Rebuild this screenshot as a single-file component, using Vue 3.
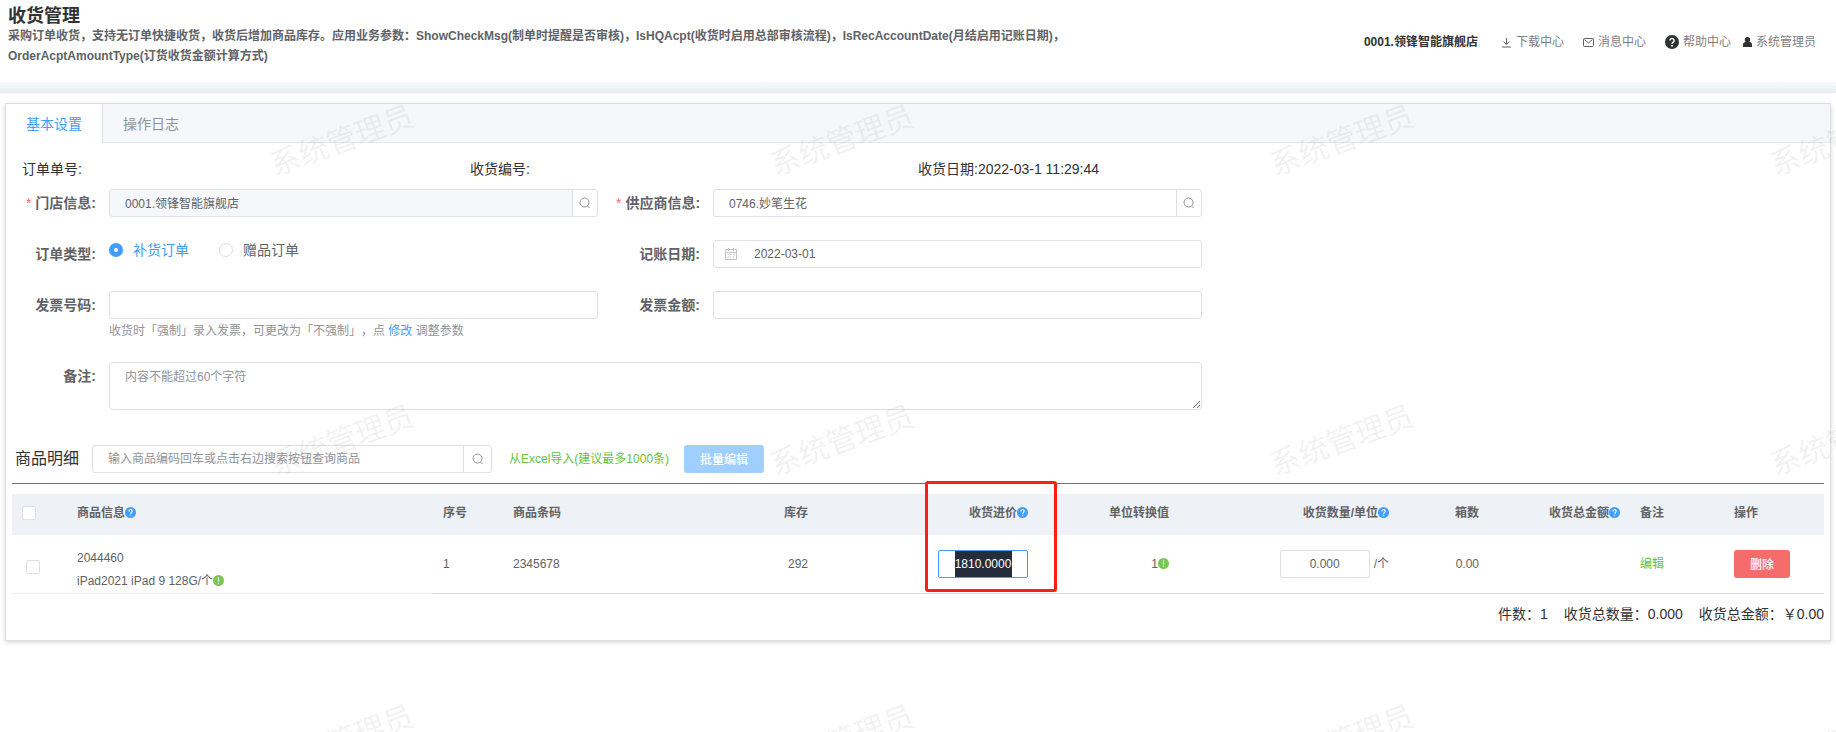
<script setup>
import { ref } from "vue"

const activeTab = ref("base")
const orderType = ref("补货订单")
const store = ref("0001.领锋智能旗舰店")
const supplier = ref("0746.妙笔生花")
const accountDate = ref("2022-03-01")
const invoiceNo = ref("")
const invoiceAmount = ref("")
const remark = ref("")
const keyword = ref("")

const tabs = [
  { key: "base", label: "基本设置" },
  { key: "log", label: "操作日志" }
]

const rows = ref([
  {
    id: 1,
    code: "2044460",
    name: "iPad2021 iPad 9 128G/个",
    barcode: "2345678",
    stock: "292",
    price: "1810.0000",
    ratio: "1",
    qty: "0.000",
    unit: "个",
    boxes: "0.00"
  }
])

// 删除
const remove = (id) => {
  rows.value = rows.value.filter(r => r.id !== id)
}
</script>

<template>
  <div class="page">
    <!-- 图标 -->
    <svg class="defs" aria-hidden="true">
      <symbol id="i-search" viewBox="0 0 12 12">
        <circle cx="5.5" cy="5.5" r="4.5" fill="none" stroke="currentColor" />
        <path d="M8.5 9l2 2" fill="none" stroke="currentColor" />
      </symbol>
      <symbol id="i-question" viewBox="0 0 16 16">
        <circle cx="8" cy="8" r="8" fill="currentColor" />
        <path d="M5.6 6.4a2.4 2.4 0 1 1 3.6 2C8.4 8.9 8 9.2 8 10.1" fill="none" stroke="#fff" stroke-width="1.7" />
        <circle cx="8" cy="12.2" r="1.1" fill="#fff" />
      </symbol>
      <symbol id="i-warn" viewBox="0 0 16 16">
        <circle cx="8" cy="8" r="8" fill="currentColor" />
        <path d="M8 3.5v5.800" stroke="#fff" stroke-width="1.6" />
        <circle cx="8" cy="11.8" r="1" fill="#fff" />
      </symbol>
    </svg>

    <header class="header">
      <div class="intro">
        <h1>收货管理</h1>
        <p>采购订单收货，支持无订单快捷收货，收货后增加商品库存。应用业务参数：ShowCheckMsg(制单时提醒是否审核)，IsHQAcpt(收货时启用总部审核流程)，IsRecAccountDate(月结启用记账日期)，OrderAcptAmountType(订货收货金额计算方式)</p>
      </div>
      <nav class="links">
        <strong>0001.领锋智能旗舰店</strong>
        <a href="#">
          <svg width="11" height="11" viewBox="0 0 11 11" fill="none" stroke="#606266"><path d="M5.5 1v6M2.5 4.5l3 3 3-3M1 10h9" /></svg>
          下载中心
        </a>
        <a href="#">
          <svg width="11" height="11" viewBox="0 0 11 11" fill="none" stroke="#606266"><rect x=".5" y="1.5" width="10" height="8" rx="1" /><path d="M1.5 2.5l4 3.5 4-3.5" /></svg>
          消息中心
        </a>
        <a href="#" class="help">
          <svg class="dark" width="14" height="14"><use href="#i-question" /></svg>
          帮助中心
        </a>
        <a href="#" class="user">
          <svg width="9" height="10" viewBox="0 0 10 11" fill="#303133"><circle cx="5" cy="3" r="3" /><path d="M0 11V8.5C0 6.5 1.5 5.5 2.5 5.5h5c1 0 2.5 1 2.5 3V11z" /></svg>
          系统管理员
        </a>
      </nav>
    </header>
    <div class="band"></div>

    <main class="card">
      <div class="tabs">
        <button
          v-for="t in tabs"
          :key="t.key"
          :class="['tab', activeTab === t.key ? 'active' : '']"
          @click="activeTab = t.key"
        >
          {{ t.label }}
        </button>
      </div>

      <div class="content">
        <div class="info">
          <span>订单单号:</span>
          <span>收货编号:</span>
          <span>收货日期:2022-03-1 11:29:44</span>
        </div>

        <!-- 表单 -->
        <form class="form" @submit.prevent>
          <div class="item">
            <label class="required" for="store">门店信息:</label>
            <div class="group disabled">
              <input id="store" v-model="store" type="text" disabled />
              <button type="button" aria-label="选择门店"><svg width="12" height="12"><use href="#i-search" /></svg></button>
            </div>
          </div>
          <div class="item">
            <label class="required" for="supplier">供应商信息:</label>
            <div class="group">
              <input id="supplier" v-model="supplier" type="text" />
              <button type="button" aria-label="选择供应商"><svg width="12" height="12"><use href="#i-search" /></svg></button>
            </div>
          </div>

          <div class="item first">
            <span class="label">订单类型:</span>
            <div class="radios">
              <label v-for="t in ['补货订单', '赠品订单']" :key="t" :class="{ checked: orderType === t }">
                <input v-model="orderType" type="radio" name="orderType" :value="t" />{{ t }}
              </label>
            </div>
          </div>
          <div class="item">
            <label for="accountDate">记账日期:</label>
            <div class="group date">
              <svg width="12" height="12" viewBox="0 0 12 12" fill="none" stroke="#c0c4cc">
                <path d="M.5 1.5h11v10H.5zM.5 4.5h11M3.5 0v3M8.5 0v3M2.5 6.5h1.5M5.2 6.5h1.5M8 6.5h1.5M2.5 9h1.5M5.2 9h1.5M8 9h1.5" />
              </svg>
              <input id="accountDate" v-model="accountDate" type="text" />
            </div>
          </div>

          <div class="item first">
            <label for="invoiceNo">发票号码:</label>
            <div class="field">
              <div class="group"><input id="invoiceNo" v-model="invoiceNo" type="text" /></div>
              <p class="tip">收货时「强制」录入发票，可更改为「不强制」，点 <a href="#">修改</a> 调整参数</p>
            </div>
          </div>
          <div class="item">
            <label for="invoiceAmount">发票金额:</label>
            <div class="group"><input id="invoiceAmount" v-model="invoiceAmount" type="text" /></div>
          </div>

          <div class="item first wide">
            <label for="remark">备注:</label>
            <textarea id="remark" v-model="remark" placeholder="内容不能超过60个字符"></textarea>
          </div>
        </form>

        <!-- 商品明细 -->
        <div class="toolbar">
          <label for="keyword">商品明细</label>
          <div class="group search">
            <input id="keyword" v-model="keyword" type="text" placeholder="输入商品编码回车或点击右边搜索按钮查询商品" />
            <button type="button" aria-label="搜索"><svg width="12" height="12"><use href="#i-search" /></svg></button>
          </div>
          <a href="#" class="green">从Excel导入(建议最多1000条)</a>
          <button class="batch" type="button">批量编辑</button>
        </div>

        <table class="table">
          <colgroup>
            <col class="w-check"><col class="w-info"><col class="w-no"><col class="w-barcode">
            <col class="w-ratio"><col class="w-input"><col class="w-ratio"><col class="w-input">
            <col class="w-box"><col class="w-ratio"><col class="w-remark"><col class="w-action">
          </colgroup>
          <thead>
            <tr>
              <th><input type="checkbox" aria-label="全选" /></th>
              <th>商品信息<svg class="blue"><use href="#i-question" /></svg></th>
              <th>序号</th>
              <th>商品条码</th>
              <th class="right">库存</th>
              <th class="right price">收货进价<svg class="blue"><use href="#i-question" /></svg><i class="mark"></i></th>
              <th class="right">单位转换值</th>
              <th class="right">收货数量/单位<svg class="blue"><use href="#i-question" /></svg></th>
              <th class="right">箱数</th>
              <th class="right">收货总金额<svg class="blue"><use href="#i-question" /></svg></th>
              <th>备注</th>
              <th>操作</th>
            </tr>
          </thead>
          <tbody>
            <tr v-for="(row, i) in rows" :key="row.id">
              <td class="check"><input type="checkbox" :aria-label="row.name" /></td>
              <td class="goods">{{ row.code }}<br>{{ row.name }}<svg class="warn"><use href="#i-warn" /></svg></td>
              <td>{{ i + 1 }}</td>
              <td>{{ row.barcode }}</td>
              <td class="right">{{ row.stock }}</td>
              <td class="right">
                <div class="num editing"><span class="selected"><input v-model="row.price" type="text" aria-label="收货进价" /></span></div>
              </td>
              <td class="right">{{ row.ratio }}<svg class="warn"><use href="#i-warn" /></svg></td>
              <td class="right">
                <div class="qty">
                  <div class="num"><input v-model="row.qty" type="text" aria-label="收货数量" /></div>
                  <span>/{{ row.unit }}</span>
                </div>
              </td>
              <td class="right">{{ row.boxes }}</td>
              <td></td>
              <td><a href="#" class="green">编辑</a></td>
              <td><button class="delete" type="button" @click="remove(row.id)">删除</button></td>
            </tr>
          </tbody>
        </table>

        <div class="total">
          <span>件数：{{ rows.length }}</span>
          <span>收货总数量：0.000</span>
          <span>收货总金额：￥0.00</span>
        </div>
      </div>
    </main>

    <!-- 水印 -->
    <div class="watermark" aria-hidden="true">
      <span v-for="n in 12" :key="n">系统管理员</span>
    </div>
  </div>
</template>

<style>
body {
  margin: 0;
  background: #fff;
}
</style>

<style scoped>
.page {
  position: relative;
  min-height: 100vh;
  overflow: hidden;
  font-family: "Liberation Sans", "Noto Sans CJK SC", sans-serif;
  font-size: 12px;
  line-height: 20px;
  color: #606266;
}

.page * {
  box-sizing: border-box;
}

.defs {
  position: absolute;
  width: 0;
  height: 0;
}

input,
button,
textarea {
  font-family: inherit;
  font-size: 12px;
  color: #606266;
}

a {
  text-decoration: none;
}

svg {
  flex: none;
}

/* 页头 */
.header {
  display: flex;
  justify-content: space-between;
  height: 82px;
  padding: 6px 20px 0 8px;
}

.intro {
  flex: 0 1 60%;
}

h1 {
  margin: 0;
  font-size: 18px;
  line-height: 20px;
  color: #303133;
}

.intro p {
  margin: 0;
  font-weight: bold;
}

.links {
  display: flex;
  align-items: center;
  height: 20px;
  margin-top: 26px;
}

.links strong {
  margin-right: 23px;
  color: #303133;
}

.links a {
  display: flex;
  align-items: center;
  gap: 4px;
  margin-right: 19px;
  color: #808080;
}

.links .help {
  margin-right: 12px;
}

.links .user {
  margin-right: 0;
}

.dark {
  color: #303133;
}

.band {
  height: 11px;
  background: linear-gradient(#f8f9fb, #e9edf1);
}

/* 标签页 */
.card {
  margin: 10px 5px 0;
  border: 1px solid #dcdfe6;
  box-shadow: 0 2px 4px rgba(0, 0, 0, 0.12), 0 0 6px rgba(0, 0, 0, 0.04);
}

.tabs {
  display: flex;
  height: 39px;
  background: #f5f7fa;
  border-bottom: 1px solid #e4e7ed;
}

.tab {
  height: 39px;
  padding: 0 20px 2px;
  border: none;
  background: none;
  font-size: 14px;
  color: #909399;
}

.tab.active {
  background: #fff;
  border-right: 1px solid #dcdfe6;
  color: #409eff;
}

.content {
  padding: 16px 6px;
}

.info {
  display: grid;
  grid-template-columns: repeat(4, 1fr);
  padding: 0 10px;
  font-size: 14px;
  color: #303133;
}

/* 表单 */
.form {
  display: grid;
  grid-template-columns: repeat(3, 1fr);
  row-gap: 23px;
  margin-top: 10px;
}

.item {
  display: flex;
  align-items: flex-start;
  padding-right: 18px;
}

.first {
  grid-column: 1;
}

.wide {
  grid-column: 1 / span 2;
}

.item > label,
.label {
  flex: none;
  width: 97px;
  padding-right: 13px;
  font-size: 14px;
  font-weight: bold;
  line-height: 28px;
  text-align: right;
  white-space: nowrap;
}

.required::before {
  content: "*";
  margin-right: 4px;
  font-weight: normal;
  color: #f56c6c;
}

.field {
  flex: 1;
}

.group {
  display: flex;
  flex: 1;
  align-items: center;
  height: 28px;
  border: 1px solid #dcdfe6;
  border-radius: 3px;
  background: #fff;
}

.group input {
  flex: 1;
  min-width: 0;
  height: 26px;
  padding: 0 15px 2px;
  border: none;
  background: none;
  outline: none;
}

.group button {
  display: flex;
  align-items: center;
  justify-content: center;
  width: 25px;
  height: 26px;
  padding: 0;
  border: none;
  border-left: 1px solid #dcdfe6;
  border-radius: 0 3px 3px 0;
  background: #fff;
  color: #909399;
}

.disabled {
  background: #f5f7fa;
}

.date {
  padding-left: 11px;
}

.date input {
  padding: 0 15px 0 17px;
}

.radios {
  display: flex;
  gap: 30px;
  font-size: 14px;
}

.radios label {
  display: flex;
  align-items: center;
  gap: 10px;
}

.radios input {
  appearance: none;
  width: 14px;
  height: 14px;
  margin: 0;
  border: 1px solid #dcdfe6;
  border-radius: 50%;
}

.radios input:checked {
  border: 5px solid #409eff;
}

.checked {
  color: #409eff;
}

.tip {
  margin: 2px 0 -2px;
  color: #909399;
  text-spacing-trim: space-all;
}

.tip a {
  color: #409eff;
}

textarea {
  flex: 1;
  height: 48px;
  padding: 5px 15px;
  border: 1px solid #dcdfe6;
  border-radius: 4px;
  line-height: 18px;
  outline: none;
}

::placeholder {
  color: #909399;
}

/* 商品明细 */
.toolbar {
  display: flex;
  align-items: center;
  margin-top: 35px;
  padding: 0 3px 10px;
  border-bottom: 1px solid #737373;
}

.toolbar label {
  margin-right: 13px;
  font-size: 16px;
  color: #303133;
}

.search {
  flex: 0 1 400px;
  margin-right: 17px;
}

.toolbar .search input {
  padding: 0 15px;
}

.search button {
  width: 28px;
}

.green {
  color: #67c23a;
}

.batch,
.delete {
  height: 28px;
  padding: 0 16px 2px;
  border: none;
  border-radius: 3px;
  font-weight: 500;
  color: #fff;
}

.batch {
  margin-left: 15px;
  background: #a0cfff;
}

.delete {
  background: #f56c6c;
}

.table {
  width: 100%;
  margin-top: 10px;
  border-collapse: separate;
  border-spacing: 0;
  table-layout: fixed;
}

.w-check { width: 55px; }
.w-info { width: 366px; }
.w-no { width: 70px; }
.w-barcode { width: 174px; }
.w-ratio { width: 141px; }
.w-input { width: 220px; }
.w-box { width: 90px; }
.w-remark { width: 94px; }
.w-action { width: 100px; }

th,
td {
  padding: 0 10px;
  text-align: left;
}

th {
  height: 41px;
  padding-bottom: 4px;
  background: #eef1f6;
}

td {
  height: 59px;
  border-bottom: 1px solid #d8dadd;
}

.right {
  text-align: right;
}

td:nth-child(-n + 2) {
  border-color: #ebeef5;
}

.check {
  padding: 5px 10px 0 14px;
}

.goods {
  padding-top: 12px;
  line-height: 23px;
}

th svg,
td svg {
  width: 11px;
  height: 11px;
  vertical-align: -1px;
}

.blue {
  color: #409eff;
}

.warn {
  color: #7ac756;
}

th input,
.check input {
  appearance: none;
  display: block;
  width: 14px;
  height: 14px;
  margin: 0;
  border: 1px solid #dcdfe6;
  border-radius: 2px;
  background: #fff;
}

/* 进价列标注框 */
.price {
  position: relative;
}

.mark {
  position: absolute;
  top: -13px;
  right: -19px;
  width: 132px;
  height: 111px;
  border: 3px solid #ff1e10;
  border-radius: 3px;
  pointer-events: none;
}

.num {
  display: flex;
  justify-content: center;
  width: 90px;
  height: 28px;
  margin-left: auto;
  border: 1px solid #dcdfe6;
  border-radius: 2px;
}

.num input {
  width: 57px;
  height: 26px;
  padding: 0;
  border: none;
  background: none;
  text-align: center;
  outline: none;
}

.editing {
  border-color: #409eff;
}

.selected {
  background: #252d3d;
}

.selected input {
  color: #fff;
}

.qty {
  display: flex;
  align-items: center;
  justify-content: flex-end;
  gap: 4px;
}

.qty .num {
  margin: 0;
}

.total {
  display: flex;
  justify-content: flex-end;
  gap: 16px;
  margin-top: 10px;
  font-size: 14px;
  color: #303133;
}

/* 水印 */
.watermark {
  position: absolute;
  inset: 0;
  display: grid;
  grid-template-columns: repeat(4, 500px);
  grid-auto-rows: 300px;
  place-items: start;
  overflow: hidden;
  pointer-events: none;
}

.watermark span {
  margin: 121px 0 0 267px;
  font-size: 30px;
  line-height: 40px;
  white-space: nowrap;
  color: rgba(150, 150, 150, 0.13);
  transform: rotate(-20deg);
}
</style>
